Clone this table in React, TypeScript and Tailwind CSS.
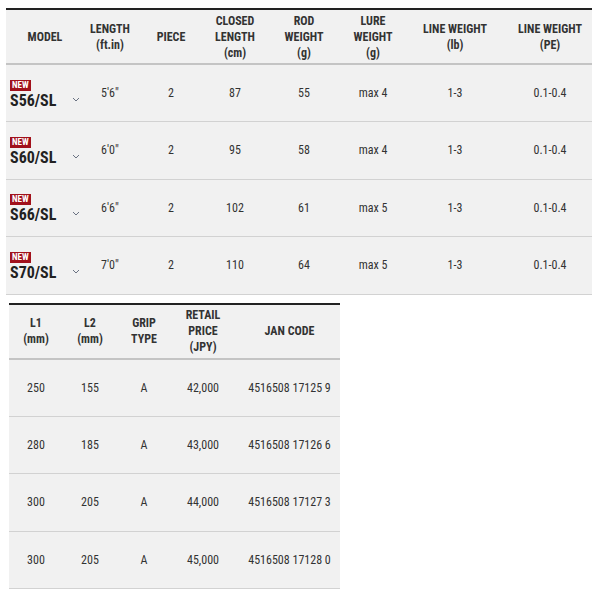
import React from "react";

const specs = [
  { model: "S56/SL", length: "5'6\"", piece: "2", closed: "87", weight: "55", lure: "max 4", lb: "1-3", pe: "0.1-0.4" },
  { model: "S60/SL", length: "6'0\"", piece: "2", closed: "95", weight: "58", lure: "max 4", lb: "1-3", pe: "0.1-0.4" },
  { model: "S66/SL", length: "6'6\"", piece: "2", closed: "102", weight: "61", lure: "max 5", lb: "1-3", pe: "0.1-0.4" },
  { model: "S70/SL", length: "7'0\"", piece: "2", closed: "110", weight: "64", lure: "max 5", lb: "1-3", pe: "0.1-0.4" },
];

const prices = [
  { l1: "250", l2: "155", grip: "A", price: "42,000", jan: "4516508 17125 9" },
  { l1: "280", l2: "185", grip: "A", price: "43,000", jan: "4516508 17126 6" },
  { l1: "300", l2: "205", grip: "A", price: "44,000", jan: "4516508 17127 3" },
  { l1: "300", l2: "205", grip: "A", price: "45,000", jan: "4516508 17128 0" },
];

const font = "font-['Roboto_Condensed','Liberation_Sans_Narrow','Arial_Narrow',Roboto,sans-serif]";

function Chevron() {
  return (
    <svg width="8" height="5" viewBox="0 0 8 5" className="text-gray-500">
      <path d="M1 1l3 3 3-3" fill="none" stroke="currentColor" strokeWidth="1" />
    </svg>
  );
}

export default function App() {
  return (
    <div className={`bg-white min-h-[600px] pt-2 ${font} text-[#333]`}>
      {/* spec table */}
      <div className="ml-[6px] w-[586px] bg-[#f1f1f1]">
        <table className="w-full table-fixed border-collapse">
          <colgroup>
            <col className="w-[74px]" />
            <col className="w-[60px]" />
            <col className="w-[62px]" />
            <col className="w-[66px]" />
            <col className="w-[72px]" />
            <col className="w-[66px]" />
            <col className="w-[98px]" />
            <col />
          </colgroup>
          <thead>
            <tr className="h-[55px] border-t-2 border-t-[#222] border-b-2 border-b-[#c4c4c4] text-[12px] font-bold leading-4">
              <th className="pl-1">MODEL</th>
              <th>LENGTH<br />(ft.in)</th>
              <th>PIECE</th>
              <th>CLOSED<br />LENGTH<br />(cm)</th>
              <th>ROD<br />WEIGHT<br />(g)</th>
              <th>LURE<br />WEIGHT<br />(g)</th>
              <th>LINE WEIGHT<br />(lb)</th>
              <th className="pl-1">LINE WEIGHT<br />(PE)</th>
            </tr>
          </thead>
          <tbody className="text-[12px] text-center">
            {specs.map((s) => (
              <tr key={s.model} className="h-[57.5px] border-b border-b-[#d2d2d2]">
                <td className="pl-1 pt-1 text-left">
                  <div className="flex items-end justify-between">
                    <div className="flex flex-col items-start">
                      <span className="bg-[#a1111c] text-white text-[9px] font-bold leading-[11px] px-[2px]">NEW</span>
                      <span className="text-[16px] font-bold leading-5 text-[#222]">{s.model}</span>
                    </div>
                    <span className="mb-[9px]"><Chevron /></span>
                  </div>
                </td>
                <td>{s.length}</td>
                <td>{s.piece}</td>
                <td>{s.closed}</td>
                <td>{s.weight}</td>
                <td>{s.lure}</td>
                <td>{s.lb}</td>
                <td className="pl-1">{s.pe}</td>
              </tr>
            ))}
          </tbody>
        </table>
      </div>

      {/* price table */}
      <div className="ml-[9px] mt-2 w-[331px] bg-[#f1f1f1]">
        <table className="w-full table-fixed border-collapse">
          <colgroup>
            <col className="w-[54px]" />
            <col className="w-[54px]" />
            <col className="w-[54px]" />
            <col className="w-[64px]" />
            <col />
          </colgroup>
          <thead>
            <tr className="h-[55px] border-t-2 border-t-[#222] border-b-2 border-b-[#c4c4c4] text-[12px] font-bold leading-4">
              <th>L1<br />(mm)</th>
              <th>L2<br />(mm)</th>
              <th>GRIP<br />TYPE</th>
              <th>RETAIL<br />PRICE<br />(JPY)</th>
              <th className="pl-1">JAN CODE</th>
            </tr>
          </thead>
          <tbody className="text-[12px] text-center">
            {prices.map((p) => (
              <tr key={p.jan} className="h-[57.5px] border-b border-b-[#d2d2d2]">
                <td>{p.l1}</td>
                <td>{p.l2}</td>
                <td>{p.grip}</td>
                <td>{p.price}</td>
                <td className="pl-1">{p.jan}</td>
              </tr>
            ))}
          </tbody>
        </table>
      </div>
    </div>
  );
}
